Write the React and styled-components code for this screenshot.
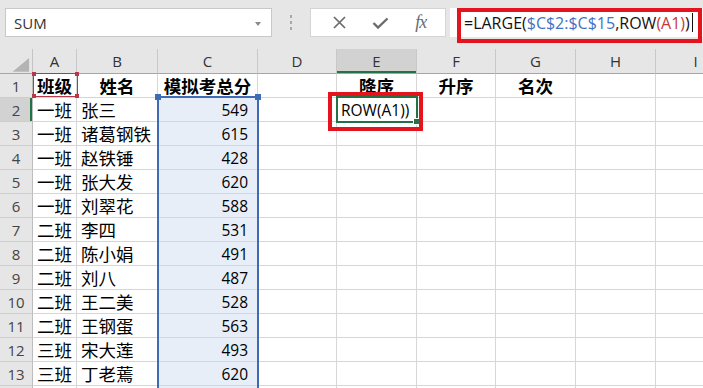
import React from "react";
import styled, { createGlobalStyle } from "styled-components";

const GlobalStyle = createGlobalStyle`
  html, body {
    margin: 0;
    padding: 0;
    background: #ffffff;
    overflow: hidden;
  }
  body {
    font-family: "Open Sans", "Noto Sans CJK SC", sans-serif;
  }
`;

const LATIN = `"Open Sans", "Noto Sans CJK SC", sans-serif`;
const CJK = `"Noto Sans CJK SC", "Open Sans", sans-serif`;

const COLS = ["A", "B", "C", "D", "E", "F", "G", "H", "I"];
const COL_WIDTHS = [44, 81, 100, 79, 80, 79, 80, 80, 80];

const rows = [
  ["班级", "姓名", "模拟考总分", "", "降序", "升序", "名次", "", ""],
  ["一班", "张三", "549", "", "ROW(A1))"],
  ["一班", "诸葛钢铁", "615"],
  ["一班", "赵铁锤", "428"],
  ["一班", "张大发", "620"],
  ["一班", "刘翠花", "588"],
  ["二班", "李四", "531"],
  ["二班", "陈小娟", "491"],
  ["二班", "刘八", "487"],
  ["二班", "王二美", "528"],
  ["二班", "王钢蛋", "563"],
  ["三班", "宋大莲", "493"],
  ["三班", "丁老蔫", "620"],
  [],
];

const isCjk = (text) => /[\u4e00-\u9fff]/.test(text);

const App = () => {
  return (
    <Page>
      <GlobalStyle />
      <TopBar>
        <NameBox>
          <span>SUM</span>
          <DropArrow />
        </NameBox>
        <Grip>
          <Dot />
          <Dot />
          <Dot />
        </Grip>
        <ButtonBox>
          <svg width="15" height="13" viewBox="0 0 15 13">
            <path d="M2 1 L13 12 M13 1 L2 12" stroke="#6b6b6b" strokeWidth="1.7" fill="none" />
          </svg>
          <svg width="17" height="12" viewBox="0 0 17 12">
            <path d="M1.5 6 L6 10.5 L15.5 1.5" stroke="#6b6b6b" strokeWidth="2.4" fill="none" />
          </svg>
          <Fx>fx</Fx>
        </ButtonBox>
        <FormulaField>
          <span>=LARGE(</span>
          <RefText color="#4472c4">$C$2:$C$15</RefText>
          <span>,ROW</span>
          <RefText color="#c8383a">(A1)</RefText>
          <span>)</span>
          <Caret />
          <Annotation />
        </FormulaField>
      </TopBar>

      <Sheet>
        <Corner>
          <svg width="33" height="24" viewBox="0 0 33 24">
            <polygon points="30,9 30,23 13,23" fill="#b4b4b4" />
          </svg>
        </Corner>
        {COLS.map((c) => (
          <ColHead key={c} $active={c === "E"}>
            {c}
          </ColHead>
        ))}

        {rows.map((row, r) => (
          <React.Fragment key={r}>
            <RowHead $active={r === 1}>{r < 13 ? r + 1 : ""}</RowHead>
            {COLS.map((c, i) => {
              const text = row[i] || "";
              const header = r === 0;
              const align = header ? "center" : c === "C" ? "right" : "left";
              return (
                <Cell
                  key={c}
                  $align={align}
                  $cjk={isCjk(text)}
                  $bold={header}
                  $range={c === "C" && r > 0}
                >
                  {text}
                </Cell>
              );
            })}
          </React.Fragment>
        ))}

        <RangeBox>
          <Handle style={{ left: -4, top: -4 }} />
          <Handle style={{ right: -4, top: -4 }} />
        </RangeBox>
        <RefBox>
          <RefCorner style={{ left: -2, top: -2 }} />
          <RefCorner style={{ right: -2, top: -2 }} />
          <RefCorner style={{ right: -2, bottom: -2 }} />
          <RefCorner style={{ left: -2, bottom: -2 }} />
        </RefBox>
        <ActiveBox>
          <FillHandle />
        </ActiveBox>
        <CellAnnotation />
      </Sheet>
    </Page>
  );
};

const Page = styled.div`
  width: 703px;
  height: 388px;
  overflow: hidden;
  background: #ffffff;
`;

const TopBar = styled.div`
  height: 49px;
  box-sizing: border-box;
  background: #e6e6e6;
  display: flex;
  align-items: flex-start;
  padding: 8px 0 0 5px;
  font-family: ${LATIN};
  font-size: 15px;
  color: #222;
`;

const NameBox = styled.div`
  width: 267px;
  height: 29px;
  box-sizing: border-box;
  background: #ffffff;
  border: 1px solid #c8c8c8;
  display: flex;
  align-items: center;
  justify-content: space-between;
  padding: 0 10px 0 8px;
  color: #333;
`;

const DropArrow = styled.div`
  width: 0;
  height: 0;
  border-left: 3.5px solid transparent;
  border-right: 3.5px solid transparent;
  border-top: 4px solid #8a8a8a;
  margin-top: 2px;
`;

const Grip = styled.div`
  width: 38px;
  height: 29px;
  display: flex;
  flex-direction: column;
  align-items: center;
  justify-content: center;
  gap: 3px;
`;

const Dot = styled.div`
  width: 2px;
  height: 3px;
  background: #a8a8a8;
`;

const ButtonBox = styled.div`
  width: 136px;
  height: 29px;
  box-sizing: border-box;
  background: #ffffff;
  border: 1px solid #d4d4d4;
  display: flex;
  align-items: center;
  justify-content: space-around;
  padding: 0 6px 0 8px;
`;

const Fx = styled.span`
  font-family: "Liberation Serif", serif;
  font-style: italic;
  font-size: 18px;
  color: #6b6b6b;
  letter-spacing: -1px;
`;

const FormulaField = styled.div`
  position: relative;
  flex: 1;
  margin-left: 4px;
  height: 29px;
  background: #ffffff;
  display: flex;
  align-items: center;
  padding-left: 14px;
  white-space: nowrap;
  font-size: 16px;
  color: #111;
`;

const RefText = styled.span`
  color: ${(p) => p.color};
`;

const Caret = styled.div`
  width: 1px;
  height: 19px;
  background: #111;
  margin-left: 2px;
`;

const Annotation = styled.div`
  position: absolute;
  left: 7px;
  top: 0;
  width: 245px;
  height: 35px;
  box-sizing: border-box;
  border: 4px solid #e3141c;
`;

const Sheet = styled.div`
  position: relative;
  display: grid;
  grid-template-columns: 33px ${COL_WIDTHS.map((w) => `${w}px`).join(" ")};
  grid-template-rows: 25px repeat(14, 24px);
  font-family: ${LATIN};
  font-size: 15px;
`;

const Corner = styled.div`
  background: #e6e6e6;
  border-right: 1px solid #c4c4c4;
  border-bottom: 1px solid #a6a6a6;
  box-sizing: border-box;
  display: flex;
`;

const ColHead = styled.div`
  box-sizing: border-box;
  background: ${(p) => (p.$active ? "#d2d2d2" : "#e6e6e6")};
  border-right: 1px solid #c8c8c8;
  border-bottom: 1px solid #a6a6a6;
  box-shadow: ${(p) => (p.$active ? "inset 0 -2px 0 #217346" : "none")};
  display: flex;
  align-items: center;
  justify-content: center;
  color: #333;
`;

const RowHead = styled.div`
  box-sizing: border-box;
  background: ${(p) => (p.$active ? "#d2d2d2" : "#e6e6e6")};
  border-right: 1px solid #bdbdbd;
  border-bottom: 1px solid #cdcdcd;
  box-shadow: ${(p) => (p.$active ? "inset -2px 0 0 #217346" : "none")};
  display: flex;
  align-items: center;
  justify-content: center;
  color: #444;
`;

const Cell = styled.div`
  box-sizing: border-box;
  border-right: 1px solid #d6d6d6;
  border-bottom: 1px solid #d6d6d6;
  background: ${(p) => (p.$range ? "#e7eef8" : "#ffffff")};
  display: flex;
  align-items: center;
  justify-content: ${(p) =>
    p.$align === "right" ? "flex-end" : p.$align === "center" ? "center" : "flex-start"};
  padding: ${(p) => (p.$align === "right" ? "0 9px 0 0" : p.$align === "left" ? "0 0 0 4px" : "0")};
  font-family: ${(p) => (p.$cjk ? CJK : LATIN)};
  font-size: ${(p) => (p.$cjk ? "17.5px" : "15.5px")};
  font-weight: ${(p) => (p.$bold ? 700 : 400)};
  color: #000;
  white-space: nowrap;
  overflow: visible;
`;

const RangeBox = styled.div`
  position: absolute;
  left: 157px;
  top: 47px;
  width: 102px;
  height: 320px;
  box-sizing: border-box;
  border: 2px solid #3f6ab5;
`;

const Handle = styled.div`
  position: absolute;
  width: 6px;
  height: 6px;
  background: #3f6ab5;
`;

const RefBox = styled.div`
  position: absolute;
  left: 33px;
  top: 24px;
  width: 45px;
  height: 24px;
  box-sizing: border-box;
  border: 1px solid #b7384a;
`;

const RefCorner = styled.div`
  position: absolute;
  width: 4px;
  height: 4px;
  background: #b7384a;
`;

const ActiveBox = styled.div`
  position: absolute;
  left: 336px;
  top: 47px;
  width: 82px;
  height: 27px;
  box-sizing: border-box;
  border: 2px solid #217346;
`;

const FillHandle = styled.div`
  position: absolute;
  right: -4px;
  bottom: -4px;
  width: 5px;
  height: 5px;
  background: #217346;
  border: 1px solid #ffffff;
`;

const CellAnnotation = styled.div`
  position: absolute;
  left: 328px;
  top: 43px;
  width: 95px;
  height: 39px;
  box-sizing: border-box;
  border: 4px solid #e3141c;
`;

export default App;
